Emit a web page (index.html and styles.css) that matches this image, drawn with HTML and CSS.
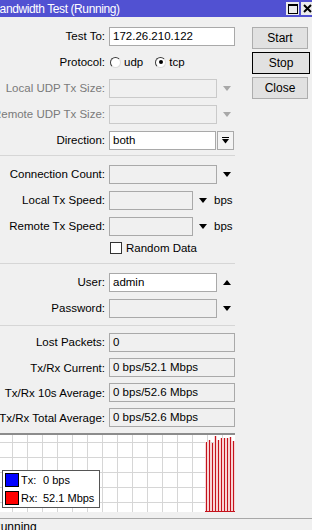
FILE: index.html
```html
<!DOCTYPE html>
<html>
<head>
  <title>Bandwidth Test</title>
  <link rel="stylesheet" href="styles.css">
</head>
<body>
  <div class="window">
    <div class="titlebar">
      <span class="title">Bandwidth Test (Running)</span>
      <div class="title-buttons">
        <span class="tbtn"><span class="max-box"></span></span>
        <span class="tbtn close">
          <svg width="9" height="9" viewBox="0 0 9 9"><path d="M1 1 L8 8 M8 1 L1 8" stroke="#000" stroke-width="2"/></svg>
        </span>
      </div>
    </div>

    <div class="main">
      <div class="form">
        <div class="row">
          <span class="lbl">Test To:</span>
          <div class="field w-full">172.26.210.122</div>
        </div>
        <div class="row">
          <span class="lbl">Protocol:</span>
          <span class="radio"></span><span class="opt">udp</span>
          <span class="radio checked"></span><span class="opt">tcp</span>
        </div>
        <div class="row disabled">
          <span class="lbl">Local UDP Tx Size:</span>
          <div class="field w-combo dis"></div>
          <span class="drop"><span class="tri-down"></span></span>
        </div>
        <div class="row disabled">
          <span class="lbl">Remote UDP Tx Size:</span>
          <div class="field w-combo dis"></div>
          <span class="drop"><span class="tri-down"></span></span>
        </div>
        <div class="row">
          <span class="lbl">Direction:</span>
          <div class="field w-dir">both</div>
          <span class="dir-btn">
            <svg width="7" height="7" viewBox="0 0 7 7"><rect x="0" y="0" width="7" height="1" fill="#000"/><path d="M0 2 H7 L3.5 6.5 Z" fill="#000"/></svg>
          </span>
        </div>

        <div class="sep sep-a"></div>

        <div class="row">
          <span class="lbl">Connection Count:</span>
          <div class="field w-combo ro"></div>
          <span class="drop"><span class="tri-down"></span></span>
        </div>
        <div class="row">
          <span class="lbl">Local Tx Speed:</span>
          <div class="field w-speed ro"></div>
          <span class="drop"><span class="tri-down"></span></span>
          <span class="unit">bps</span>
        </div>
        <div class="row">
          <span class="lbl">Remote Tx Speed:</span>
          <div class="field w-speed ro"></div>
          <span class="drop"><span class="tri-down"></span></span>
          <span class="unit">bps</span>
        </div>
        <div class="row row-check">
          <span class="lbl"></span>
          <span class="checkbox"></span><span class="opt">Random Data</span>
        </div>

        <div class="sep sep-b"></div>

        <div class="row">
          <span class="lbl">User:</span>
          <div class="field w-combo">admin</div>
          <span class="drop"><span class="tri-up"></span></span>
        </div>
        <div class="row">
          <span class="lbl">Password:</span>
          <div class="field w-combo ro"></div>
          <span class="drop"><span class="tri-down"></span></span>
        </div>

        <div class="sep sep-c"></div>

        <div class="row">
          <span class="lbl">Lost Packets:</span>
          <div class="field w-full ro">0</div>
        </div>
        <div class="row row-s">
          <span class="lbl">Tx/Rx Current:</span>
          <div class="field w-full ro">0 bps/52.1 Mbps</div>
        </div>
        <div class="row row-s">
          <span class="lbl">Tx/Rx 10s Average:</span>
          <div class="field w-full ro">0 bps/52.6 Mbps</div>
        </div>
        <div class="row row-s">
          <span class="lbl">Tx/Rx Total Average:</span>
          <div class="field w-full ro">0 bps/52.6 Mbps</div>
        </div>
      </div>

      <div class="buttons">
        <button class="btn">Start</button>
        <button class="btn focused">Stop</button>
        <button class="btn">Close</button>
      </div>
    </div>

    <div class="graph">
      <svg class="bars" width="235" height="77" viewBox="0 0 235 77">
        <path d="M205 77 V7 H208 V5 H211 V8 H214 V1 H217 V5 H220 V3 H223 V3 H226 V3 H229 V2 H232 V6 H235 V77 Z" fill="#f7d4d4"/>
        <g stroke="#c4121c" stroke-width="1">
          <line x1="206.5" y1="7" x2="206.5" y2="77"/>
          <line x1="209.5" y1="5" x2="209.5" y2="77"/>
          <line x1="212.5" y1="8" x2="212.5" y2="77"/>
          <line x1="215.5" y1="1" x2="215.5" y2="77"/>
          <line x1="218.5" y1="5" x2="218.5" y2="77"/>
          <line x1="221.5" y1="3" x2="221.5" y2="77"/>
          <line x1="224.5" y1="3" x2="224.5" y2="77"/>
          <line x1="227.5" y1="3" x2="227.5" y2="77"/>
          <line x1="230.5" y1="2" x2="230.5" y2="77"/>
          <line x1="233.5" y1="6" x2="233.5" y2="77"/>
        </g>
        <line x1="205" y1="76.5" x2="235" y2="76.5" stroke="#c4121c"/>
      </svg>
      <div class="legend">
        <span class="swatch tx"></span><span>Tx:</span><span>0 bps</span>
        <span class="swatch rx"></span><span>Rx:</span><span>52.1 Mbps</span>
      </div>
    </div>

    <div class="status">Running</div>
  </div>
</body>
</html>
```

FILE: styles.css
```css
/* Base */
body {
  margin: 0;
  background: #f0f0f0;
  font-family: "Liberation Sans", Arial, sans-serif;
  font-size: 11.5px;
  color: #000;
}

.window {
  width: 312px;
  height: 530px;
  overflow: hidden;
}

/* Title bar */
.titlebar {
  height: 17px;
  background: #5151d2;
  display: flex;
  align-items: center;
  overflow: hidden;
}

.title {
  color: #fff;
  font-size: 12px;
  letter-spacing: -0.4px;
  margin-left: -8px;
  white-space: nowrap;
}

.title-buttons {
  margin-left: auto;
  margin-right: -2px;
  display: flex;
  gap: 2px;
}

.tbtn {
  width: 13px;
  height: 13px;
  background: #ececec;
  display: flex;
  align-items: center;
  justify-content: center;
}

.max-box {
  width: 8px;
  height: 7px;
  border: 1px solid #000;
  border-top-width: 2px;
}

/* Form */
.main {
  display: flex;
  padding-top: 6px;
}

.form {
  width: 236px;
  flex: none;
}

.row {
  display: flex;
  align-items: center;
  height: 26px;
}

.row-s {
  height: 25px;
}

.row-check {
  height: 18px;
}

.lbl {
  width: 105px;
  flex: none;
  display: flex;
  justify-content: flex-end;
  white-space: nowrap;
  margin-right: 4px;
}

.disabled .lbl {
  color: #7a7a7a;
}

.field {
  box-sizing: border-box;
  height: 19px;
  line-height: 17px;
  border: 1px solid #a9a9a9;
  background: #fff;
  padding-left: 3px;
  white-space: nowrap;
  overflow: hidden;
}

.field.ro {
  background: #f0f0f0;
}

.field.dis {
  background: #f0f0f0;
  border-color: #cacaca;
}

.w-full { width: 126px; }
.w-combo { width: 108px; }
.w-speed { width: 84px; }
.w-dir { width: 107px; }

.drop {
  width: 19px;
  display: flex;
  justify-content: center;
}

.tri-down {
  width: 0;
  height: 0;
  border-left: 4px solid transparent;
  border-right: 4px solid transparent;
  border-top: 5px solid #000;
}

.tri-up {
  width: 0;
  height: 0;
  border-left: 4px solid transparent;
  border-right: 4px solid transparent;
  border-bottom: 5px solid #000;
}

.disabled .tri-down {
  border-top-color: #a8a8a8;
}

.unit {
  margin-left: 2px;
}

.dir-btn {
  box-sizing: border-box;
  width: 17px;
  height: 19px;
  margin-left: 1px;
  border: 1px solid #a9a9a9;
  background: #f4f4f4;
  display: flex;
  align-items: center;
  justify-content: center;
}

/* Radio + checkbox */
.radio {
  box-sizing: border-box;
  width: 11px;
  height: 11px;
  margin-left: 1px;
  border-radius: 50%;
  border: 1px solid;
  border-color: #3a3a3a #dcdcdc #dcdcdc #3a3a3a;
  background: #fff;
  display: flex;
  align-items: center;
  justify-content: center;
}

.radio + .opt {
  margin-left: 3px;
  margin-right: 11px;
}

.radio.checked::after {
  content: "";
  width: 4px;
  height: 4px;
  border-radius: 50%;
  background: #000;
}

.checkbox {
  box-sizing: border-box;
  width: 12px;
  height: 12px;
  margin-left: 1px;
  border: 1px solid #333;
  background: #fff;
}

.checkbox + .opt {
  margin-left: 4px;
}

/* Separators */
.sep {
  width: 235px;
  height: 1px;
  background: #d6d6d6;
}

.sep-a { margin: 2px 0 5px; }
.sep-b { margin: 6px 0 5px; }
.sep-c { margin: 4px 0 3px; }

/* Buttons */
.buttons {
  margin-left: 16px;
  padding-top: 4px;
  display: flex;
  flex-direction: column;
  gap: 3px;
}

.btn {
  box-sizing: border-box;
  width: 56px;
  height: 22px;
  padding: 0;
  border: 1px solid #adadad;
  background: #e1e1e1;
  font-family: inherit;
  font-size: 12px;
  color: #000;
}

.btn.focused {
  border: 1px solid #000;
  width: 58px;
}

/* Graph */
.graph {
  position: relative;
  width: 235px;
  height: 77px;
  margin-top: 3px;
  border-top: 2px solid #8c8c8c;
  background-color: #fff;
  background-image:
    linear-gradient(to right, #d6d6d6 1px, transparent 1px),
    linear-gradient(to bottom, #d6d6d6 1px, transparent 1px);
  background-size: 15px 15px;
  background-position: 12px 7px;
}

.bars {
  position: absolute;
  left: 0;
  top: 0;
}

.legend {
  position: absolute;
  left: 2px;
  top: 35px;
  box-sizing: border-box;
  width: 98px;
  height: 38px;
  padding: 2px;
  border: 1px solid #555;
  background: #fff;
  display: grid;
  grid-template-columns: 14px 20px auto;
  column-gap: 2px;
  row-gap: 3px;
  align-items: center;
  font-size: 11px;
  white-space: nowrap;
}

.swatch {
  box-sizing: border-box;
  width: 14px;
  height: 14px;
  border: 1px solid #000;
}

.swatch.tx { background: #0000ff; }
.swatch.rx { background: #ff0000; }

/* Status bar */
.status {
  margin-top: 6px;
  border-top: 1px solid #a8a8a8;
  padding-top: 1px;
  margin-left: -8px;
  font-size: 12px;
}
```
